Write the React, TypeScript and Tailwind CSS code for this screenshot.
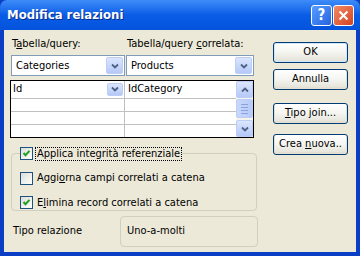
import React from 'react';

const FONT = "font-['Tahoma','DejaVu_Sans_Condensed','Liberation_Sans',sans-serif]";

function Chevron({ up = false }: { up?: boolean }) {
  return (
    <svg width="8" height="6" viewBox="0 0 8 6" className={up ? 'rotate-180' : ''}>
      <path d="M1 1.5 L4 4.5 L7 1.5" fill="none" stroke="#4d6185" strokeWidth="1.8" />
    </svg>
  );
}

function DropBtn({ className = '', up = false }: { className?: string; up?: boolean }) {
  return (
    <div
      className={
        'flex items-center justify-center rounded-[2px] border border-[#bccdf8] bg-gradient-to-b from-[#dbe5fd] to-[#b5c9f7] ' +
        className
      }
    >
      <Chevron up={up} />
    </div>
  );
}

function Combo({ text, className = '' }: { text: string; className?: string }) {
  return (
    <div className={'flex h-[21px] items-center border border-[#7f9db9] bg-white p-[1px] ' + className}>
      <span className="flex-1 pl-[3px] leading-none">{text}</span>
      <DropBtn className="h-[17px] w-[17px]" />
    </div>
  );
}

function Check({ checked }: { checked: boolean }) {
  return (
    <div className="flex h-[13px] w-[13px] shrink-0 items-center justify-center border border-[#1c5180] bg-gradient-to-br from-[#dcdcd7] to-white">
      {checked && (
        <svg width="9" height="9" viewBox="0 0 9 9">
          <path d="M1.5 4 L3.5 6.2 L7.5 1.8" fill="none" stroke="#21a121" strokeWidth="2" />
        </svg>
      )}
    </div>
  );
}

function XpButton({ children, className = '', def = false }: { children: React.ReactNode; className?: string; def?: boolean }) {
  return (
    <div
      className={
        'flex h-[21px] w-[75px] items-center justify-center rounded-[3px] border border-[#003c74] bg-gradient-to-b from-white via-[#f4f4f0] to-[#e3e1d6] ' +
        (def ? 'shadow-[inset_0_0_0_1px_#cee7ff] ' : 'shadow-[inset_0_-1px_0_1px_#e3e0d3] ') +
        className
      }
    >
      <span>{children}</span>
    </div>
  );
}

export default function App() {
  return (
    <div className={'flex h-[256px] w-[360px] flex-col bg-[#0a3ec4] text-[11px] text-black ' + FONT}>
      {/* Title bar */}
      <div className="flex h-[30px] items-center rounded-t-[7px] bg-gradient-to-b from-[#3d8cf8] via-[#0a5ce6] to-[#0453dc] pl-[7px] pr-[6px]">
        <span className="flex-1 text-[13px] font-bold text-white [text-shadow:1px_1px_0_#0a2d8c]">Modifica relazioni</span>
        <div className="mr-[1px] flex h-[21px] w-[21px] items-center justify-center rounded-[3px] border border-white bg-gradient-to-br from-[#5a9cff] to-[#2463e0] text-[15px] font-bold text-white">
          ?
        </div>
        <div className="flex h-[21px] w-[21px] items-center justify-center rounded-[3px] border border-white bg-gradient-to-br from-[#f08a66] to-[#d5401c]">
          <svg width="11" height="11" viewBox="0 0 11 11">
            <path d="M1.5 1.5 L9.5 9.5 M9.5 1.5 L1.5 9.5" stroke="white" strokeWidth="2" />
          </svg>
        </div>
      </div>

      {/* Client area */}
      <div className="mx-[4px] mb-[4px] flex flex-1 bg-[#ece9d8]">
        <div className="ml-[7px] flex w-[247px] flex-col">
          <div className="mt-[8px] flex h-[13px] items-center">
            <span className="ml-[1px] w-[115px]">
              T<span className="underline">a</span>bella/query:
            </span>
            <span>
              Tabella/query <span className="underline">c</span>orrelata:
            </span>
          </div>

          <div className="mt-[4px] flex">
            <Combo text="Categories" className="w-[114px]" />
            <Combo text="Products" className="ml-[1px] w-[128px]" />
          </div>

          {/* Grid */}
          <div className="mt-[4px] ml-[-1px] flex h-[58px] w-[244px] border border-black bg-white">
            <div className="flex flex-1 flex-col">
              {[0, 1, 2, 3].map((i) => (
                <div key={i} className={'flex flex-1 ' + (i < 3 ? 'border-b border-[#c0c0c0]' : '')}>
                  <div className="flex w-[114px] items-center border-r border-[#c0c0c0] pl-[2px]">
                    {i === 0 && (
                      <>
                        <span className="flex-1">Id</span>
                        <DropBtn className="mr-[1px] h-[13px] w-[16px]" />
                      </>
                    )}
                  </div>
                  <div className="flex flex-1 items-center pl-[3px]">{i === 0 && 'IdCategory'}</div>
                </div>
              ))}
            </div>
            <div className="flex w-[17px] flex-col bg-[#f5f4ee]">
              <DropBtn up className="h-[17px] w-[17px]" />
              <div className="mt-[1px] flex h-[19px] w-[17px] flex-col items-center justify-center gap-[2px] rounded-[2px] border border-[#bccdf8] bg-gradient-to-r from-[#c9d8fc] to-[#b7cbf8]">
                <div className="h-[1px] w-[7px] bg-[#8aa3e0]" />
                <div className="h-[1px] w-[7px] bg-[#8aa3e0]" />
                <div className="h-[1px] w-[7px] bg-[#8aa3e0]" />
                <div className="h-[1px] w-[7px] bg-[#8aa3e0]" />
              </div>
              <div className="flex-1" />
              <DropBtn className="h-[17px] w-[17px]" />
            </div>
          </div>

          {/* Group box */}
          <fieldset className="mt-[8px] h-[65px] w-[246px] rounded-[4px] border border-[#d0d0bf] pl-[8px]">
            <legend className="flex h-[15px] items-center">
              <Check checked />
              <span className="ml-[2px] border border-dotted border-black px-[1px] leading-[12px]">
                Applica integrità referenziale
              </span>
            </legend>
            <div className="mt-[9px] flex items-center">
              <Check checked={false} />
              <span className="ml-[4px]">
                Aggi<span className="underline">o</span>rna campi correlati a catena
              </span>
            </div>
            <div className="mt-[8px] flex items-center">
              <Check checked />
              <span className="ml-[4px]">
                E<span className="underline">l</span>imina record correlati a catena
              </span>
            </div>
          </fieldset>

          <div className="mt-[5px] flex items-center">
            <span className="ml-[2px] w-[107px]">Tipo relazione</span>
            <div className="flex h-[31px] w-[138px] items-center rounded-[4px] border border-[#d0d0bf] pl-[6px]">
              Uno-a-molti
            </div>
          </div>
        </div>

        {/* Buttons */}
        <div className="ml-[15px] flex flex-col pt-[12px]">
          <XpButton def>OK</XpButton>
          <XpButton className="mt-[6px]">Annulla</XpButton>
          <XpButton className="mt-[13px]">
            <span className="underline">T</span>ipo join...
          </XpButton>
          <XpButton className="mt-[10px]">
            Crea <span className="underline">n</span>uova..
          </XpButton>
        </div>
      </div>
    </div>
  );
}
